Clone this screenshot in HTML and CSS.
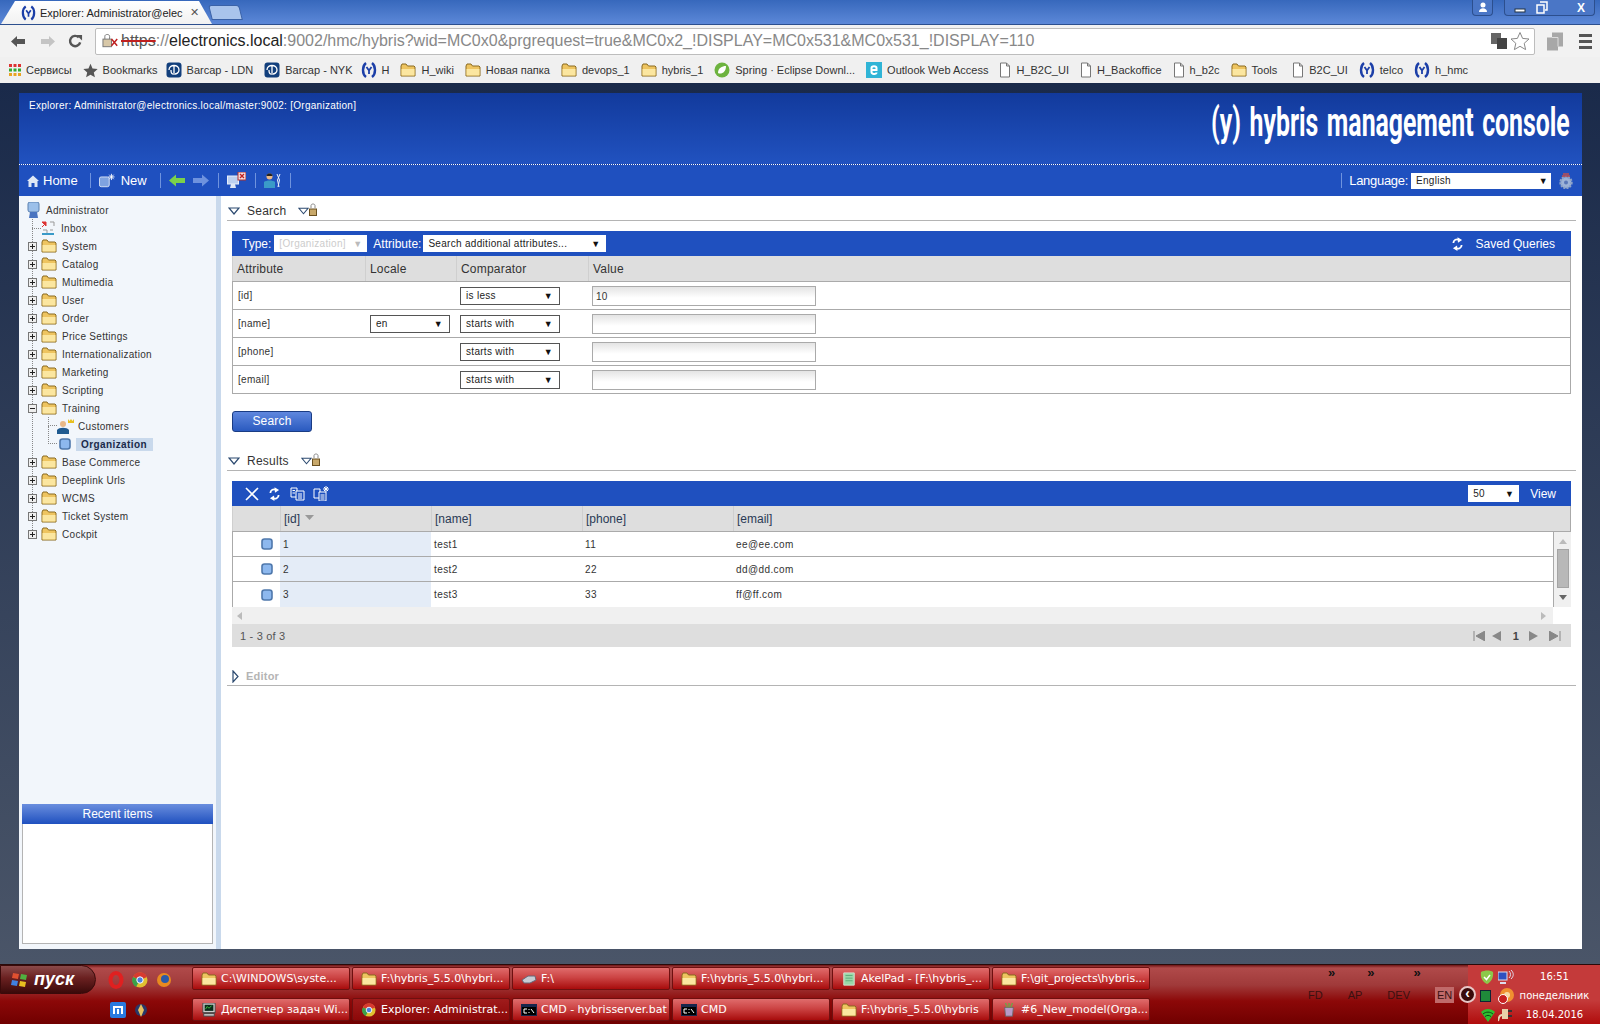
FILE: index.html
```html
<!doctype html>
<html>

<head>
    <meta charset="utf-8">
    <title>Explorer: Administrator@electronics.local</title>
    <link rel="stylesheet" href="styles.css">
</head>

<body>

    <!-- shared icons -->
    <svg class="iconDefs" width="0" height="0">
        <symbol id="folder" viewBox="0 0 16 14">
            <path d="M1 3 L2 1 H6 L7.500 3 H14 L15 4 V13 H1 Z" fill="#eec460" stroke="#8a6a20"/>
            <path d="M1.500 6 H14.500 V12.500 H1.500 Z" fill="#fbe6a0" stroke="none"/>
        </symbol>
        <symbol id="yLogo" viewBox="0 0 16 16">
            <path d="M5 1 C1 4 1 12 5 15 M11 1 C15 4 15 12 11 15" fill="none" stroke="#1c3fa8" stroke-width="2.400"/>
            <path d="M5.500 5 L8 8.500 L10.500 5 M8 8.500 V12" fill="none" stroke="#1c3fa8" stroke-width="1.800"/>
        </symbol>
        <symbol id="barcap" viewBox="0 0 16 16">
            <rect x="0.500" y="0.500" width="15" height="15" rx="3" fill="#123f7c"/>
            <path d="M3 8 C3 2 13 2 13 8 C13 11 10 12 9 12 M8 3 V13 M5 8 C5 11 6 12 7 12" fill="none" stroke="#fff" stroke-width="1.300"/>
        </symbol>
        <symbol id="doc" viewBox="0 0 12 16">
            <path d="M1.500 1 H7.500 L10.500 4 V15 H1.500 Z M7.500 1 V4 H10.500" fill="#fff" stroke="#777"/>
        </symbol>
        <symbol id="plusBox" viewBox="0 0 9 9">
            <rect x="0.500" y="0.500" width="8" height="8" fill="#efefef" stroke="#777"/>
            <path d="M2 4.500 H7 M4.500 2 V7" stroke="#222"/>
        </symbol>
        <symbol id="minusBox" viewBox="0 0 9 9">
            <rect x="0.500" y="0.500" width="8" height="8" fill="#efefef" stroke="#777"/>
            <path d="M2 4.500 H7" stroke="#222"/>
        </symbol>
        <symbol id="itemBox" viewBox="0 0 12 12">
            <rect x="1" y="1" width="10" height="10" rx="2.500" fill="#8db8ee" stroke="#4f78ac" stroke-width="1.600"/>
        </symbol>
        <symbol id="triDown" viewBox="0 0 12 8">
            <path d="M1 1 H11 L6 7 Z" fill="#fff" stroke="#2c4a70" stroke-width="1.200"/>
        </symbol>
        <symbol id="lock" viewBox="0 0 8 13">
            <path d="M2 5 V2.500 C2 0.500 6 0.500 6 2.500 V5" fill="none" stroke="#888"/>
            <rect x="0.500" y="6" width="7" height="6.500" fill="#c8a86a" stroke="#6a5020"/>
        </symbol>
        <symbol id="refresh" viewBox="0 0 12 16">
            <path d="M1.500 7 C1.500 3.500 5 2 8 3.500 M10.500 9 C10.500 12.500 7 14 4 12.500" fill="none" stroke="#fff" stroke-width="2"/>
            <path d="M6 0.500 L11 3.500 L6.500 6.500 Z M6 15.500 L1 12.500 L5.500 9.500 Z" fill="#fff"/>
        </symbol>
        <symbol id="cmd" viewBox="0 0 16 12">
            <rect width="16" height="12" fill="#16264c"/>
            <rect x="1" y="3" width="14" height="8" fill="#000"/>
            <path d="M3 5 H6 M3 5 V9 H6 M8 5 V6 M8 8 V9 M10 5 L13 9" stroke="#fff" fill="none"/>
        </symbol>
    </svg>

    <div class="tabStrip">
        <div class="tab">
            <svg class="tabIcon"><use href="#yLogo"/></svg>
            <span class="tabTitle">Explorer: Administrator@elec</span>
            <span class="tabClose">✕</span>
        </div>
        <div class="newTab"></div>
        <div class="windowButtons">
            <div class="winUser">
                <svg width="10" height="11" viewBox="0 0 10 11"><circle cx="5" cy="3" r="2.500" fill="#fff"/><path d="M1 10 C1 5 9 5 9 10 Z" fill="#fff"/></svg>
            </div>
            <div class="winGroup">
                <svg width="12" height="10" viewBox="0 0 12 10"><rect x="1" y="6" width="10" height="3" fill="#fff" stroke="#234"/></svg>
                <svg class="winMax" width="12" height="13" viewBox="0 0 12 13"><path d="M4 1 H11 V9 H9 M1 4 H8 V12 H1 Z" fill="none" stroke="#fff" stroke-width="1.500"/></svg>
                <span class="winClose">X</span>
            </div>
        </div>
    </div>

    <div class="navBar">
        <svg class="navIcon" viewBox="0 0 16 14"><path d="M1 7 L7 1.500 V4.500 H15 V9.500 H7 V12.500 Z" fill="#555"/></svg>
        <svg class="navIcon" viewBox="0 0 16 14"><path d="M15 7 L9 1.500 V4.500 H1 V9.500 H9 V12.500 Z" fill="#c4c4c4"/></svg>
        <svg class="navIcon" viewBox="0 0 16 16"><path d="M13 9 A5.500 5.500 0 1 1 11.500 3.500" fill="none" stroke="#555" stroke-width="2.600"/><path d="M9 1 H15 V7 Z" fill="#555"/></svg>
        <div class="omnibox">
            <svg class="secureIcon" viewBox="0 0 20 16">
                <rect x="1" y="6" width="9" height="8" fill="#d8c8a8" stroke="#777"/>
                <path d="M3 6 V3 C3 0.500 8 0.500 8 3 V6" fill="none" stroke="#777"/>
                <path d="M10 6 L16 13 M16 6 L10 13" stroke="#c02020" stroke-width="1.600"/>
            </svg>
            <div class="urlText"><span class="urlHttps">https</span><span class="urlGray">://</span><span class="urlHost">electronics.local</span><span class="urlGray">:9002/hmc/hybris?wid=MC0x0&amp;prgrequest=true&amp;MC0x2_!DISPLAY=MC0x531&amp;MC0x531_!DISPLAY=110</span></div>
            <svg class="translateIcon" viewBox="0 0 16 16"><rect x="0" y="0" width="10" height="11" fill="#666"/><rect x="6" y="5" width="10" height="11" fill="#444"/></svg>
            <svg class="starIcon" viewBox="0 0 20 20"><path d="M10 1.500 L12.600 7.400 L19 8 L14.200 12.300 L15.600 18.600 L10 15.300 L4.400 18.600 L5.800 12.300 L1 8 L7.400 7.400 Z" fill="#fff" stroke="#888"/></svg>
        </div>
        <svg class="extIcon" viewBox="0 0 18 20"><path d="M6 1 H17 V15 H12 V19 H1 V6 H6 Z" fill="#a8a8a8"/><path d="M6 6 H12 V15" fill="none" stroke="#ddd"/></svg>
        <div class="menuIcon"><span></span><span></span><span></span></div>
    </div>

    <div class="bookmarks">
        <div class="bookmark">
            <svg width="12" height="12" viewBox="0 0 12 12"><path d="M0 1.500 H12" stroke="#d33" stroke-width="3" stroke-dasharray="3 1.500"/><path d="M0 6 H12" stroke="#3a3" stroke-width="3" stroke-dasharray="3 1.500"/><path d="M0 10.500 H12" stroke="#e9a320" stroke-width="3" stroke-dasharray="3 1.500"/></svg>
            <span>Сервисы</span>
        </div>
        <div class="bookmark">
            <svg width="15" height="15" viewBox="0 0 20 20"><path d="M10 1 L12.700 7.300 L19.500 8 L14.400 12.500 L15.900 19 L10 15.500 L4.100 19 L5.600 12.500 L0.500 8 L7.300 7.300 Z" fill="#555"/></svg>
            <span>Bookmarks</span>
        </div>
        <div class="bookmark bmTight"><svg class="bmIcon"><use href="#barcap"/></svg><span>Barcap - LDN</span></div>
        <div class="bookmark"><svg class="bmIcon"><use href="#barcap"/></svg><span>Barcap - NYK</span></div>
        <div class="bookmark bmTight"><svg class="bmIcon"><use href="#yLogo"/></svg><span>H</span></div>
        <div class="bookmark"><svg class="bmIcon"><use href="#folder"/></svg><span>H_wiki</span></div>
        <div class="bookmark"><svg class="bmIcon"><use href="#folder"/></svg><span>Новая папка</span></div>
        <div class="bookmark"><svg class="bmIcon"><use href="#folder"/></svg><span>devops_1</span></div>
        <div class="bookmark"><svg class="bmIcon"><use href="#folder"/></svg><span>hybris_1</span></div>
        <div class="bookmark">
            <svg class="bmIcon" viewBox="0 0 16 16"><circle cx="8" cy="8" r="7.500" fill="#6db33f"/><path d="M4 11 C4 6 8 4 12 4 C12 9 9 12 5 11.500" fill="#fff"/></svg>
            <span>Spring · Eclipse Downl...</span>
        </div>
        <div class="bookmark">
            <svg class="bmIcon" viewBox="0 0 16 16"><rect width="16" height="16" fill="#2fb4d6"/><path d="M5.500 8 H10.500 V6 C10.500 3.500 5.500 3.500 5.500 6 V10 C5.500 12.500 10.500 12.500 10.500 10.500" fill="none" stroke="#fff" stroke-width="2"/></svg>
            <span>Outlook Web Access</span>
        </div>
        <div class="bookmark"><svg class="bmDoc"><use href="#doc"/></svg><span>H_B2C_UI</span></div>
        <div class="bookmark"><svg class="bmDoc"><use href="#doc"/></svg><span>H_Backoffice</span></div>
        <div class="bookmark"><svg class="bmDoc"><use href="#doc"/></svg><span>h_b2c</span></div>
        <div class="bookmark"><svg class="bmIcon"><use href="#folder"/></svg><span>Tools</span></div>
        <div class="bookmark bmLoose"><svg class="bmDoc"><use href="#doc"/></svg><span>B2C_UI</span></div>
        <div class="bookmark"><svg class="bmIcon"><use href="#yLogo"/></svg><span>telco</span></div>
        <div class="bookmark"><svg class="bmIcon"><use href="#yLogo"/></svg><span>h_hmc</span></div>
    </div>

    <div class="desktop">
        <div class="page">

            <div class="pageHeader">
                <div class="pageTitle">Explorer: Administrator@electronics.local/master:9002: [Organization]</div>
                <div class="logoText">(y) hybris management console</div>
            </div>

            <div class="mainToolbar">
                <div class="toolItem homeItem">
                    <svg width="12" height="12" viewBox="0 0 12 12"><path d="M0 6 L6 0.500 L12 6 L10.500 6 V12 H7.500 V8 H4.500 V12 H1.500 V6 Z" fill="#dfe8f6"/></svg>
                    <span>Home</span>
                </div>
                <div class="toolSep"></div>
                <div class="toolItem">
                    <svg width="16" height="15" viewBox="0 0 18 15"><rect x="0.500" y="3.500" width="11" height="11" rx="2" fill="#7fa3e0" stroke="#dfe8f6"/><path d="M14 0 V7 M10.500 3.500 H17.500 M11.500 1 L16.500 6 M16.500 1 L11.500 6" stroke="#fff"/></svg>
                    <span class="newLabel">New</span>
                </div>
                <div class="toolSep"></div>
                <svg class="toolArrow" width="16" height="13" viewBox="0 0 16 13"><path d="M0 6.500 L7 0.500 V4 H16 V9 H7 V12.500 Z" fill="#7bd14a"/></svg>
                <svg class="toolArrow" width="16" height="13" viewBox="0 0 16 13"><path d="M16 6.500 L9 0.500 V4 H0 V9 H9 V12.500 Z" fill="#6e92de"/></svg>
                <div class="toolSep sepTight"></div>
                <svg class="toolGlyph" width="19" height="17" viewBox="0 0 19 17"><rect x="0.500" y="4" width="11" height="8" fill="#bcd0f0" stroke="#e8eefa"/><path d="M4 12 L3 16 H9 L8 12" fill="#dfe8f6"/><rect x="11" y="0" width="8" height="8" fill="#f4dede" stroke="#b03030"/><path d="M13 2 L17 6 M17 2 L13 6" stroke="#c02020" stroke-width="1.300"/></svg>
                <div class="toolSep sepTight"></div>
                <svg class="toolGlyph" width="17" height="15" viewBox="0 0 17 15"><circle cx="5.500" cy="3.500" r="3" fill="#e8b888"/><path d="M5.500 0.500 C2.500 0.500 2.500 3 2.500 3 H8.500 C8.500 3 8.500 0.500 5.500 0.500 Z" fill="#222"/><path d="M0 15 V9 C2 7 9 7 11 9 V15 Z" fill="#3a9ac8"/><path d="M13 1 L15.500 7 L14 14 M16 1 L13.500 7 L15 14" fill="none" stroke="#e8eefa"/></svg>
                <div class="toolSep sepTight"></div>
                <div class="toolSpacer"></div>
                <div class="toolSep sepRight"></div>
                <div class="langLabel">Language:</div>
                <div class="fakeSelect langSelect"><span>English</span><i>▼</i></div>
                <svg class="gearIcon" width="16" height="16" viewBox="0 0 16 16"><circle cx="8" cy="9.500" r="5.500" fill="#9db4d8" stroke="#8da3c8" stroke-width="2.400" stroke-dasharray="2 1"/><circle cx="8" cy="9.500" r="2" fill="#5a78b8"/><path d="M5 1 H11 M4 3 H12" stroke="#c05050" stroke-width="1.400"/></svg>
            </div>

            <div class="pageBody">

                <div class="sidebar">
                    <div class="treeRoot">
                        <svg width="14" height="17" viewBox="0 0 14 17"><rect x="1" y="0" width="11" height="10" rx="2" fill="#9cc0ea" stroke="#5a80b0"/><path d="M3 10 L2 16 H11 L10 10" fill="#4a74c0"/></svg>
                        <span>Administrator</span>
                    </div>
                    <div class="tree">
                        <div class="treeRow leafRow">
                            <i class="treeDots"></i>
                            <svg width="14" height="14" viewBox="0 0 14 14"><path d="M4 3 L1 6 M1 1 H5 V5 Z" fill="#d33" stroke="#d33"/><path d="M9 1 H13 V5 M2 9 H6 V13 M9 9 H12" fill="none" stroke="#999"/><path d="M1 13 H13" stroke="#3a9ac8" stroke-width="2"/></svg>
                            <span class="inboxLabel">Inbox</span>
                        </div>
                        <div class="treeRow"><svg class="plus"><use href="#plusBox"/></svg><svg class="treeFolder"><use href="#folder"/></svg><span>System</span></div>
                        <div class="treeRow"><svg class="plus"><use href="#plusBox"/></svg><svg class="treeFolder"><use href="#folder"/></svg><span>Catalog</span></div>
                        <div class="treeRow"><svg class="plus"><use href="#plusBox"/></svg><svg class="treeFolder"><use href="#folder"/></svg><span>Multimedia</span></div>
                        <div class="treeRow"><svg class="plus"><use href="#plusBox"/></svg><svg class="treeFolder"><use href="#folder"/></svg><span>User</span></div>
                        <div class="treeRow"><svg class="plus"><use href="#plusBox"/></svg><svg class="treeFolder"><use href="#folder"/></svg><span>Order</span></div>
                        <div class="treeRow"><svg class="plus"><use href="#plusBox"/></svg><svg class="treeFolder"><use href="#folder"/></svg><span>Price Settings</span></div>
                        <div class="treeRow"><svg class="plus"><use href="#plusBox"/></svg><svg class="treeFolder"><use href="#folder"/></svg><span>Internationalization</span></div>
                        <div class="treeRow"><svg class="plus"><use href="#plusBox"/></svg><svg class="treeFolder"><use href="#folder"/></svg><span>Marketing</span></div>
                        <div class="treeRow"><svg class="plus"><use href="#plusBox"/></svg><svg class="treeFolder"><use href="#folder"/></svg><span>Scripting</span></div>
                        <div class="treeRow"><svg class="plus"><use href="#minusBox"/></svg><svg class="treeFolder"><use href="#folder"/></svg><span>Training</span></div>
                        <div class="treeChildren">
                            <div class="childRow">
                                <i class="childDots"></i>
                                <svg width="17" height="15" viewBox="0 0 17 15"><circle cx="6" cy="5" r="3" fill="#e8b888"/><path d="M0 15 V11 C2 8 10 8 12 11 V15 Z" fill="#1f5a90"/><path d="M11 0 L12.500 2 L14 0 L15.500 2 L17 0 V4 H11 Z" fill="#e8c020"/></svg>
                                <span class="customersLabel">Customers</span>
                            </div>
                            <div class="childRow">
                                <i class="childDots"></i>
                                <svg class="orgIcon" width="12" height="12"><use href="#itemBox"/></svg>
                                <span class="treeSelected">Organization</span>
                            </div>
                        </div>
                        <div class="treeRow"><svg class="plus"><use href="#plusBox"/></svg><svg class="treeFolder"><use href="#folder"/></svg><span>Base Commerce</span></div>
                        <div class="treeRow"><svg class="plus"><use href="#plusBox"/></svg><svg class="treeFolder"><use href="#folder"/></svg><span>Deeplink Urls</span></div>
                        <div class="treeRow"><svg class="plus"><use href="#plusBox"/></svg><svg class="treeFolder"><use href="#folder"/></svg><span>WCMS</span></div>
                        <div class="treeRow"><svg class="plus"><use href="#plusBox"/></svg><svg class="treeFolder"><use href="#folder"/></svg><span>Ticket System</span></div>
                        <div class="treeRow"><svg class="plus"><use href="#plusBox"/></svg><svg class="treeFolder"><use href="#folder"/></svg><span>Cockpit</span></div>
                    </div>

                    <div class="recentItems">
                        <div class="recentHeader">Recent items</div>
                    </div>
                </div>

                <div class="content">

                    <div class="sectionHeader">
                        <svg class="sectionTri"><use href="#triDown"/></svg>
                        <span class="sectionName">Search</span>
                        <svg class="sectionTri smallTri"><use href="#triDown"/></svg>
                        <svg class="lockIcon"><use href="#lock"/></svg>
                    </div>

                    <div class="panel">
                        <div class="blueBar">
                            <span class="barLabel">Type:</span>
                            <div class="fakeSelect typeSelect"><span>[Organization]</span><i>▼</i></div>
                            <span class="barLabel attrLabel">Attribute:</span>
                            <div class="fakeSelect attrSelect"><span>Search additional attributes...</span><i>▼</i></div>
                            <div class="barRight">
                                <svg class="barRefresh"><use href="#refresh"/></svg>
                                <span class="barLabel">Saved Queries</span>
                            </div>
                        </div>
                        <div class="searchHead">
                            <div>Attribute</div>
                            <div>Locale</div>
                            <div>Comparator</div>
                            <div>Value</div>
                        </div>
                        <div class="searchRow">
                            <div>[id]</div>
                            <div></div>
                            <div><div class="fakeSelect rowSelect"><span>is less</span><i>▼</i></div></div>
                            <div><div class="valueInput">10</div></div>
                        </div>
                        <div class="searchRow">
                            <div>[name]</div>
                            <div><div class="fakeSelect localeSelect"><span>en</span><i>▼</i></div></div>
                            <div><div class="fakeSelect rowSelect"><span>starts with</span><i>▼</i></div></div>
                            <div><div class="valueInput"></div></div>
                        </div>
                        <div class="searchRow">
                            <div>[phone]</div>
                            <div></div>
                            <div><div class="fakeSelect rowSelect"><span>starts with</span><i>▼</i></div></div>
                            <div><div class="valueInput"></div></div>
                        </div>
                        <div class="searchRow">
                            <div>[email]</div>
                            <div></div>
                            <div><div class="fakeSelect rowSelect"><span>starts with</span><i>▼</i></div></div>
                            <div><div class="valueInput"></div></div>
                        </div>
                        <div class="searchButton">Search</div>
                    </div>

                    <div class="sectionHeader resultsHeader">
                        <svg class="sectionTri"><use href="#triDown"/></svg>
                        <span class="sectionName">Results</span>
                        <svg class="sectionTri smallTri"><use href="#triDown"/></svg>
                        <svg class="lockIcon"><use href="#lock"/></svg>
                    </div>

                    <div class="panel">
                        <div class="blueBar">
                            <svg class="resIcon" width="14" height="14" viewBox="0 0 14 14"><path d="M1 1 L13 13 M13 1 L1 13" stroke="#fff" stroke-width="1.600"/></svg>
                            <svg class="barRefresh resRefresh"><use href="#refresh"/></svg>
                            <svg class="resIcon resCopy" width="15" height="14" viewBox="0 0 15 14"><path d="M1 1 H7 V10 H1 Z" fill="#1f50bf" stroke="#fff"/><path d="M6 4 H14 V13 H6 Z" fill="#1f50bf" stroke="#fff"/><path d="M8 7 H12 M8 9 H12 M8 11 H12 M2.500 3.500 H5 M2.500 6 H5" stroke="#fff"/></svg>
                            <svg class="resIcon resPaste" width="16" height="15" viewBox="0 0 16 15"><path d="M1 3 H7 V12 H1 Z" fill="#1f50bf" stroke="#fff"/><path d="M6 6 H13 V15 H6 Z" fill="#1f50bf" stroke="#fff"/><path d="M7.500 9 H11.500 M7.500 11 H11.500 M7.500 13 H11.500" stroke="#fff"/><path d="M13 0 V6 M10 3 H16 M11 1 L15 5 M15 1 L11 5" stroke="#fff"/></svg>
                            <div class="barRight">
                                <div class="fakeSelect pageSizeSelect"><span>50</span><i>▼</i></div>
                                <span class="barLabel viewLabel">View</span>
                            </div>
                        </div>
                        <div class="resultHead">
                            <div></div>
                            <div>[id] <svg class="sortIcon" width="9" height="5" viewBox="0 0 9 5"><path d="M0 0 H9 L4.500 5 Z" fill="#999"/></svg></div>
                            <div>[name]</div>
                            <div>[phone]</div>
                            <div>[email]</div>
                        </div>
                        <div class="resultBody">
                            <div class="resultRows">
                                <div class="resultRow">
                                    <div class="rowMark"><svg width="12" height="12"><use href="#itemBox"/></svg></div>
                                    <div class="idCell">1</div>
                                    <div>test1</div>
                                    <div>11</div>
                                    <div>ee@ee.com</div>
                                </div>
                                <div class="resultRow">
                                    <div class="rowMark"><svg width="12" height="12"><use href="#itemBox"/></svg></div>
                                    <div class="idCell">2</div>
                                    <div>test2</div>
                                    <div>22</div>
                                    <div>dd@dd.com</div>
                                </div>
                                <div class="resultRow lastRow">
                                    <div class="rowMark"><svg width="12" height="12"><use href="#itemBox"/></svg></div>
                                    <div class="idCell">3</div>
                                    <div>test3</div>
                                    <div>33</div>
                                    <div>ff@ff.com</div>
                                </div>
                            </div>
                            <div class="vScroll">
                                <svg width="8" height="5" viewBox="0 0 8 5"><path d="M0 5 L4 0 L8 5 Z" fill="#bbb"/></svg>
                                <div class="vThumb"></div>
                                <svg width="8" height="5" viewBox="0 0 8 5"><path d="M0 0 L4 5 L8 0 Z" fill="#666"/></svg>
                            </div>
                        </div>
                        <div class="hScrollRow">
                            <div class="hScroll">
                                <svg width="5" height="8" viewBox="0 0 5 8"><path d="M5 0 L0 4 L5 8 Z" fill="#bbb"/></svg>
                                <svg width="5" height="8" viewBox="0 0 5 8"><path d="M0 0 L5 4 L0 8 Z" fill="#bbb"/></svg>
                            </div>
                        </div>
                        <div class="pagerRow">
                            <span>1 - 3 of 3</span>
                            <div class="pager">
                                <svg width="12" height="10" viewBox="0 0 12 10"><path d="M1 0 V10 M12 0 L3 5 L12 10 Z" fill="#888" stroke="#888"/></svg>
                                <svg width="10" height="10" viewBox="0 0 10 10"><path d="M10 0 L1 5 L10 10 Z" fill="#888"/></svg>
                                <b>1</b>
                                <svg width="10" height="10" viewBox="0 0 10 10"><path d="M0 0 L9 5 L0 10 Z" fill="#888"/></svg>
                                <svg class="pagerLast" width="12" height="10" viewBox="0 0 12 10"><path d="M11 0 V10 M0 0 L9 5 L0 10 Z" fill="#888" stroke="#888"/></svg>
                            </div>
                        </div>
                    </div>

                    <div class="sectionHeader editorHeader">
                        <svg width="7" height="13" viewBox="0 0 7 13"><path d="M1 1 L6 6.500 L1 12 Z" fill="#fff" stroke="#2c4a70" stroke-width="1.200"/></svg>
                        <span class="sectionName editorName">Editor</span>
                    </div>

                </div>
            </div>
        </div>
    </div>

    <div class="taskbar">
        <div class="startArea">
            <div class="startButton">
                <svg width="18" height="16" viewBox="0 0 18 16"><path d="M2 1 L8 2 L7 7 L1 6 Z" fill="#e05030"/><path d="M10 2 L16 3 L15 8 L9 7 Z" fill="#50b040"/><path d="M1 8 L7 9 L6 14 L0 13 Z" fill="#4080e0"/><path d="M9 9 L15 10 L14 15 L8 14 Z" fill="#e8c020"/></svg>
                <span>пуск</span>
            </div>
            <div class="quickIcons">
                <svg width="16" height="18" viewBox="0 0 16 18"><ellipse cx="8" cy="9" rx="5.500" ry="7" fill="none" stroke="#e02020" stroke-width="4"/></svg>
                <svg width="16" height="16" viewBox="0 0 16 16"><circle cx="8" cy="8" r="7.500" fill="#e0c030"/><path d="M8 8 L1 5 A7.500 7.500 0 0 1 15 5 Z" fill="#d83a30"/><path d="M8 8 L4 15 A7.500 7.500 0 0 1 1 5 Z" fill="#3aa04a"/><circle cx="8" cy="8" r="3.200" fill="#4a80e0" stroke="#fff"/></svg>
                <svg width="16" height="17" viewBox="0 0 16 17"><circle cx="8" cy="9" r="7" fill="#e88a20"/><circle cx="9" cy="8" r="4" fill="#2a5aa8"/></svg>
            </div>
            <div class="quickIcons lowerQuick">
                <svg width="16" height="16" viewBox="0 0 16 16"><rect width="16" height="16" rx="2" fill="#2a7ae0"/><path d="M4 12 V5 H12 V12 M8 7 V12" fill="none" stroke="#fff" stroke-width="2"/></svg>
                <svg width="16" height="17" viewBox="0 0 16 17"><circle cx="8" cy="8" r="6" fill="#28386a"/><path d="M8 2 L11 8 L8 15 L5 8 Z" fill="#e8c060"/></svg>
            </div>
        </div>
        <div class="taskButtons">
            <div class="taskButton"><svg class="taskFolder"><use href="#folder"/></svg><span>C:\WINDOWS\syste...</span></div>
            <div class="taskButton"><svg class="taskFolder"><use href="#folder"/></svg><span>F:\hybris_5.5.0\hybri...</span></div>
            <div class="taskButton">
                <svg class="taskFolder" viewBox="0 0 16 14"><path d="M1 8 L7 4 H14 L15 8 L9 11 H3 Z" fill="#c8ccd4" stroke="#667"/></svg>
                <span>F:\</span>
            </div>
            <div class="taskButton"><svg class="taskFolder"><use href="#folder"/></svg><span>F:\hybris_5.5.0\hybri...</span></div>
            <div class="taskButton">
                <svg class="taskFolder" viewBox="0 0 16 16"><path d="M2 1 H14 V15 H2 Z" fill="#9ad8a8" stroke="#d8e8d8"/><path d="M4 4 H12 M4 7 H12 M4 10 H12" stroke="#5aa878"/></svg>
                <span>AkelPad - [F:\hybris_...</span>
            </div>
            <div class="taskButton"><svg class="taskFolder"><use href="#folder"/></svg><span>F:\git_projects\hybris...</span></div>
            <div class="taskButton">
                <svg class="taskFolder" viewBox="0 0 16 16"><rect x="1" y="0" width="14" height="11" fill="#ccc" stroke="#444"/><rect x="3" y="2" width="10" height="7" fill="#0a2a1a"/><path d="M4 7 L6 4 L8 6 L11 3" fill="none" stroke="#4c4"/><rect x="2" y="12" width="12" height="3" fill="#bbb" stroke="#444"/></svg>
                <span>Диспетчер задач Wi...</span>
            </div>
            <div class="taskButton taskActive">
                <svg class="taskFolder" viewBox="0 0 16 16"><circle cx="8" cy="8" r="7.500" fill="#e0c030"/><path d="M8 8 L1 5 A7.500 7.500 0 0 1 15 5 Z" fill="#d83a30"/><path d="M8 8 L4 15 A7.500 7.500 0 0 1 1 5 Z" fill="#3aa04a"/><circle cx="8" cy="8" r="3.200" fill="#4a80e0" stroke="#fff"/></svg>
                <span>Explorer: Administrat...</span>
            </div>
            <div class="taskButton"><svg class="taskFolder"><use href="#cmd"/></svg><span>CMD - hybrisserver.bat</span></div>
            <div class="taskButton"><svg class="taskFolder"><use href="#cmd"/></svg><span>CMD</span></div>
            <div class="taskButton"><svg class="taskFolder"><use href="#folder"/></svg><span>F:\hybris_5.5.0\hybris</span></div>
            <div class="taskButton">
                <svg class="taskFolder" viewBox="0 0 16 16"><path d="M3 5 H13 L12 15 H4 Z" fill="#b89ac8" stroke="#666"/><path d="M6 5 L4 0 M8 5 V0 M10 5 L12 0" stroke="#6a4" stroke-width="1.500"/></svg>
                <span>#6_New_model(Orga...</span>
            </div>
        </div>
        <div class="langBands">
            <div class="bandArrows"><span>»</span><span>»</span><span>»</span></div>
            <div class="bandNames"><span>FD</span><span>AP</span><span>DEV</span><span class="bandActive">EN</span></div>
        </div>
        <div class="trayToggle">‹</div>
        <div class="tray">
            <div class="trayIcons">
                <svg width="14" height="14" viewBox="0 0 14 14"><path d="M1 2 C5 0 10 0 13 2 C14 8 10 13 7 14 C3 12 0 8 1 2 Z" fill="#8cc84a"/><path d="M4 7 L6.500 9.500 L10 5" fill="none" stroke="#fff" stroke-width="1.500"/></svg>
                <svg width="16" height="14" viewBox="0 0 16 14"><rect x="0" y="2" width="9" height="8" fill="#3050c0" stroke="#dde"/><path d="M2 13 H8" stroke="#dde" stroke-width="2"/><path d="M11 1 C13 3 13 6 11 8 M13 0 C16 3 16 6 13 9" fill="none" stroke="#dde"/></svg>
                <svg width="11" height="12" viewBox="0 0 11 12"><rect x="0.500" y="0.500" width="10" height="11" fill="#1f8a3a" stroke="#123"/></svg>
                <svg width="16" height="16" viewBox="0 0 16 16"><circle cx="9" cy="7" r="7" fill="#f09030"/><circle cx="9" cy="7" r="3" fill="#f8d8a0"/><circle cx="5" cy="11" r="4.500" fill="#c82020" stroke="#fff"/></svg>
                <svg width="16" height="14" viewBox="0 0 16 14"><path d="M1 4 C5 0 11 0 15 4 L8 14 Z" fill="#30c030"/><path d="M3 6 C6 3.500 10 3.500 13 6 M5 8.500 C7 7 9 7 11 8.500" fill="none" stroke="#0a4a14"/></svg>
                <svg width="15" height="15" viewBox="0 0 15 15"><path d="M0 14 C1 8 3 8 4 8" fill="none" stroke="#e8d8b8" stroke-width="2"/><rect x="4" y="2" width="6" height="10" fill="#e8d0a8"/><rect x="10" y="3" width="4" height="2" fill="#333"/><rect x="10" y="8" width="4" height="2" fill="#333"/></svg>
            </div>
            <div class="clock">
                <div>16:51</div>
                <div>понедельник</div>
                <div>18.04.2016</div>
            </div>
        </div>
    </div>

</body>

</html>
```

FILE: styles.css
```css
* {
    box-sizing: border-box;
}

body {
    margin: 0;
    height: 1024px;
    width: 1600px;
    overflow: hidden;
    display: flex;
    flex-direction: column;
    font-family: "Liberation Sans", Arial, sans-serif;
    font-size: 11px;
    color: #333;
}

.iconDefs {
    position: absolute;
}

/* browser window */

.tabStrip {
    height: 25px;
    flex: none;
    display: flex;
    align-items: flex-end;
    padding-left: 1px;
    background: linear-gradient(#3768bc, #5c88d8);
    border-bottom: 1px solid #2c4f8e;
}

.tab {
    width: 211px;
    height: 23px;
    display: flex;
    align-items: center;
    padding-left: 20px;
    background: linear-gradient(#ffffff, #f1f1f1);
    clip-path: polygon(14px 0, 198px 0, 211px 100%, 0 100%);
}

.tabIcon {
    width: 15px;
    height: 16px;
    flex: none;
}

.tabTitle {
    width: 148px;
    margin-left: 4px;
    font-size: 11px;
    white-space: nowrap;
    color: #222;
}

.tabClose {
    margin-left: 2px;
    font-size: 11px;
    color: #555;
}

.newTab {
    width: 31px;
    height: 15px;
    margin: 0 0 4px -2px;
    border: 1px solid #3a62a8;
    background: #a9c4ec;
    border-radius: 3px 3px 0 0;
    transform: skewX(14deg);
}

.windowButtons {
    margin-left: auto;
    align-self: flex-start;
    display: flex;
    gap: 11px;
    margin-right: 5px;
}

.winUser,
.winGroup {
    height: 16px;
    display: flex;
    align-items: center;
    justify-content: center;
    background: #4a76c6;
    border: 1px solid #2c4f8e;
    border-top: 0;
    border-radius: 0 0 4px 4px;
}

.winUser {
    width: 21px;
}

.winGroup {
    width: 91px;
    gap: 10px;
}

.winClose {
    margin-left: 19px;
    color: #fff;
    font-weight: bold;
    font-size: 12px;
}

.navBar {
    height: 32px;
    flex: none;
    display: flex;
    align-items: center;
    padding-left: 10px;
    background: #f2f2f2;
}

.navIcon {
    width: 16px;
    height: 15px;
    margin-right: 14px;
    flex: none;
}

.navIcon + .navIcon + .navIcon {
    margin-left: -3px;
    width: 17px;
    margin-right: 11px;
}

.omnibox {
    width: 1440px;
    height: 27px;
    flex: none;
    display: flex;
    align-items: center;
    background: #fff;
    border: 1px solid #bdbdbd;
    border-radius: 2px;
}

.secureIcon {
    width: 19px;
    height: 16px;
    margin-left: 6px;
    flex: none;
}

.urlText {
    font-size: 16px;
    white-space: nowrap;
    color: #888;
    flex: 1;
}

.urlHttps {
    color: #555;
    text-decoration: line-through;
    text-decoration-color: #c02020;
    text-decoration-thickness: 2px;
}

.urlHost {
    color: #222;
}

.translateIcon {
    width: 16px;
    height: 16px;
    flex: none;
}

.starIcon {
    width: 20px;
    height: 20px;
    margin: 0 4px 0 3px;
    flex: none;
}

.extIcon {
    width: 18px;
    height: 21px;
    margin-left: 11px;
    flex: none;
}

.menuIcon {
    margin-left: 15px;
    width: 13px;
    display: flex;
    flex-direction: column;
    gap: 3px;
}

.menuIcon span {
    height: 3px;
    background: #555;
}

.bookmarks {
    height: 27px;
    flex: none;
    display: flex;
    align-items: center;
    gap: 11px;
    padding-left: 9px;
    background: #f0f0f0;
    border-bottom: 1px solid #1a2a4a;
    font-size: 11px;
    color: #333;
    white-space: nowrap;
}

.bookmark {
    display: flex;
    align-items: center;
    gap: 5px;
}

.bmTight {
    margin-left: -3px;
}

.bmLoose {
    margin-left: 4px;
}

.bmIcon {
    width: 16px;
    height: 16px;
    flex: none;
}

.bmDoc {
    width: 12px;
    height: 16px;
    flex: none;
}

.desktop {
    flex: 1;
    min-height: 0;
    padding: 9px 18px 15px 19px;
    display: flex;
    background: linear-gradient(#1a2a4a, #4a5568);
}

/* hmc page */

.page {
    flex: 1;
    display: flex;
    flex-direction: column;
    min-width: 0;
    background: #fff;
}

.pageHeader {
    height: 72px;
    flex: none;
    display: flex;
    justify-content: space-between;
    padding: 6px 12px 0 10px;
    background: linear-gradient(#123a9c, #2152c0);
    border-bottom: 1px dotted #fff;
    color: #fff;
}

.pageTitle {
    font-size: 10px;
    line-height: 14px;
    letter-spacing: .27px;
}

.logoText {
    margin-top: 4px;
    font-family: "Roboto", sans-serif;
    font-weight: 700;
    font-size: 41px;
    line-height: 38px;
    white-space: nowrap;
    word-spacing: 4px;
    transform: scaleX(.605);
    transform-origin: right top;
}

.mainToolbar {
    height: 31px;
    flex: none;
    display: flex;
    align-items: center;
    padding-left: 8px;
    background: #1f50bf;
    color: #fff;
    font-size: 13px;
}

.toolItem {
    display: flex;
    align-items: center;
    gap: 4px;
}

.newLabel {
    margin-left: 2px;
}

.toolSep {
    width: 1px;
    height: 15px;
    margin: 0 8px 0 13px;
    background: #6f93de;
}

.homeItem + .toolSep {
    margin-left: 12px;
}

.sepTight {
    margin-left: 9px;
}

.sepRight {
    margin-right: 7px;
}

.toolArrow + .toolArrow {
    margin-left: 8px;
}

.toolSpacer {
    flex: 1;
}

.langLabel {
    margin-right: 3px;
    letter-spacing: -.3px;
}

.fakeSelect {
    display: flex;
    align-items: center;
    justify-content: space-between;
    background: #fff;
    color: #222;
    font-size: 10px;
    letter-spacing: .03em;
    white-space: nowrap;
}

.fakeSelect i {
    font-style: normal;
    font-size: 9px;
    color: #111;
}

.langSelect {
    width: 140px;
    height: 16px;
    padding: 0 3px 0 5px;
}

.gearIcon {
    margin: 0 8px 0 7px;
}

.pageBody {
    flex: 1;
    min-height: 0;
    display: flex;
}

/* left tree */

.sidebar {
    width: 202px;
    flex: none;
    display: flex;
    flex-direction: column;
    padding: 5px 3px 5px 3px;
    background: #f2f6fb;
    border-right: 5px solid #c9d9ec;
    font-size: 10px;
    letter-spacing: .03em;
}

.treeRoot {
    height: 18px;
    display: flex;
    align-items: center;
    gap: 5px;
    padding-left: 5px;
}

.tree {
    margin-left: 10px;
    margin-bottom: auto;
    margin-right: auto;
    background: linear-gradient(#888 50%, transparent 50%) 0 0 / 1px 2px repeat-y;
}

.treeRow {
    height: 18px;
    display: flex;
    align-items: center;
    margin-left: -4px;
}

.plus {
    width: 9px;
    height: 9px;
    flex: none;
}

.treeFolder {
    width: 16px;
    height: 14px;
    margin-left: 4px;
    margin-right: 5px;
    flex: none;
}

.leafRow {
    margin-left: 0;
}

.treeDots {
    width: 9px;
    border-top: 1px dotted #888;
}

.inboxLabel {
    margin-left: 6px;
}

.treeChildren {
    margin-left: 16px;
}

.childRow {
    height: 18px;
    display: flex;
    align-items: center;
}

.childDots {
    width: 9px;
    height: 18px;
    margin-top: -18px;
    border-left: 1px dotted #888;
    border-bottom: 1px dotted #888;
    flex: none;
}

.childRow:first-child .childDots {
    height: 9px;
    margin-top: -9px;
}

.customersLabel {
    margin-left: 4px;
}

.orgIcon {
    margin-left: 2px;
    flex: none;
}

.treeSelected {
    margin-left: 5px;
    padding: 1px 6px 1px 5px;
    background: #c9d9ec;
    font-weight: bold;
    letter-spacing: .4px;
    color: #1a2a4a;
}

/* hide the tree line below the last row */
.treeRow:last-child {
    background: linear-gradient(transparent 50%, #f2f6fb 50%);
}

.recentItems {
    height: 140px;
    flex: none;
    background: #fff;
    border: 1px solid #b4b4b4;
    border-top: 0;
}

.recentHeader {
    height: 20px;
    margin: 0 -1px;
    text-align: center;
    line-height: 20px;
    color: #fff;
    font-size: 12px;
    letter-spacing: 0;
    background: linear-gradient(#6a8ede, #1f50bf);
}

/* right side */

.content {
    flex: 1;
    min-width: 0;
    padding: 0 6px;
}

.sectionHeader {
    height: 25px;
    display: flex;
    align-items: center;
    padding: 6px 0 0 1px;
    border-bottom: 1px solid #b4b4b4;
}

.sectionTri {
    width: 12px;
    height: 8px;
    flex: none;
}

.sectionName {
    margin: 0 12px 0 7px;
    font-size: 12px;
    color: #333;
    letter-spacing: .02em;
}

.smallTri {
    width: 11px;
}

.lockIcon {
    width: 8px;
    height: 13px;
    margin: -3px 0 0 0;
    flex: none;
}

.panel {
    margin: 10px 5px 0;
}

.blueBar {
    height: 25px;
    display: flex;
    align-items: center;
    padding-left: 10px;
    background: #1f50bf;
    color: #fff;
}

.barLabel {
    font-size: 12px;
}

.attrLabel {
    margin-left: 6px;
}

.typeSelect {
    width: 93px;
    height: 17px;
    margin-left: 3px;
    padding: 0 5px;
    color: #ccc;
}

.typeSelect i {
    color: #bbb;
}

.attrSelect {
    width: 183px;
    height: 17px;
    margin-left: 2px;
    padding: 0 6px 0 5px;
}

.barRight {
    margin-left: auto;
    margin-right: 16px;
    display: flex;
    align-items: center;
}

.barRefresh {
    width: 11px;
    height: 16px;
    margin-right: 13px;
    flex: none;
}

.searchHead {
    display: grid;
    grid-template-columns: 133px 91px 132px 1fr;
    align-items: center;
    height: 26px;
    background: #dedede;
    border-bottom: 1px solid #aaa;
    border-right: 1px solid #aaa;
    color: #333;
    font-size: 12px;
    letter-spacing: .2px;
}

.searchHead > div {
    height: 100%;
    display: flex;
    align-items: center;
    padding-left: 4px;
    border-left: 1px solid #cfcfcf;
}

.searchRow {
    display: grid;
    grid-template-columns: 132px 90px 132px 1fr;
    align-items: center;
    height: 28px;
    padding-left: 5px;
    border: 1px solid #aaa;
    border-top: 0;
    font-size: 10px;
    letter-spacing: .03em;
}

.rowSelect,
.localeSelect {
    height: 18px;
    border: 1px solid #555;
    padding: 0 6px 0 5px;
    font-size: 10px;
}

.rowSelect {
    width: 100px;
}

.localeSelect {
    width: 80px;
}

.valueInput {
    width: 224px;
    height: 20px;
    padding: 3px 3px 0;
    border: 1px solid #aaa;
    background: linear-gradient(#e4e4e4, #fff 60%);
    line-height: 13px;
}

.searchButton {
    width: 80px;
    height: 21px;
    margin-top: 17px;
    border: 1px solid #1a3c84;
    border-radius: 3px;
    background: linear-gradient(#5f87de, #2a5abf);
    color: #fff;
    font-size: 12px;
    letter-spacing: .2px;
    line-height: 19px;
    text-align: center;
}

.resultsHeader {
    margin-top: 14px;
}

.resIcon {
    margin-left: 3px;
    flex: none;
}

.resRefresh {
    margin: 0 0 0 10px;
}

.resCopy {
    margin-left: 10px;
}

.resPaste {
    margin-left: 8px;
}

.pageSizeSelect {
    width: 51px;
    height: 17px;
    padding: 0 5px;
}

.viewLabel {
    margin-left: 11px;
    margin-right: -1px;
}

.resultHead {
    display: grid;
    grid-template-columns: 48px 151px 151px 151px 1fr;
    align-items: center;
    height: 26px;
    background: #dedede;
    border-bottom: 1px solid #aaa;
    border-right: 1px solid #aaa;
    color: #2a3a55;
    font-size: 12px;
}

.resultHead > div {
    height: 100%;
    display: flex;
    align-items: center;
    gap: 5px;
    padding-left: 3px;
    border-left: 1px solid #cfcfcf;
}

.sortIcon {
    margin-top: -3px;
}

.resultBody {
    display: flex;
    height: 75px;
}

.resultRows {
    flex: 1;
    min-width: 0;
    border-left: 1px solid #aaa;
}

.resultRow {
    display: grid;
    grid-template-columns: 47px 151px 151px 151px 1fr;
    align-items: center;
    height: 25px;
    border-bottom: 1px solid #aaa;
    font-size: 10px;
    letter-spacing: .4px;
}

.resultRow > div {
    height: 100%;
    display: flex;
    align-items: center;
    padding-left: 3px;
}

.resultRow.lastRow {
    border-bottom: 0;
}

.resultRow > .rowMark {
    justify-content: flex-end;
    padding: 0 7px 0 0;
}

.resultRow > .idCell {
    background: #e4ecf7;
}

.vScroll {
    width: 18px;
    flex: none;
    display: flex;
    flex-direction: column;
    align-items: center;
    padding-top: 7px;
    background: #f0f0f0;
    border-left: 1px solid #aaa;
}

.vThumb {
    width: 12px;
    height: 39px;
    margin: 5px 0 7px;
    background: #b8b8b8;
    border: 1px solid #a4a4a4;
}

.hScrollRow {
    height: 17px;
    padding-right: 18px;
}

.hScroll {
    height: 100%;
    display: flex;
    align-items: center;
    justify-content: space-between;
    padding: 0 7px 0 5px;
    background: #f0f0f0;
}

.pagerRow {
    height: 23px;
    display: flex;
    align-items: center;
    justify-content: space-between;
    padding: 0 10px 0 8px;
    background: #dedede;
    color: #555;
    font-size: 11px;
    letter-spacing: .2px;
}

.pager {
    display: flex;
    align-items: center;
    gap: 6px;
}

.pager b {
    margin: 0 4px 0 6px;
    font-size: 11px;
    color: #444;
}

.pagerLast {
    margin-left: 4px;
}

.editorHeader {
    margin-top: 14px;
    padding-left: 5px;
}

.editorName {
    color: #b4b4b4;
    margin-left: 7px;
    font-weight: bold;
    font-size: 11px;
}

/* windows taskbar */

.taskbar {
    height: 60px;
    flex: none;
    display: flex;
    background: linear-gradient(#6e1414, #b04a4a 3px, #a03a3a 20px, #8c0808 36px, #700000);
    border-top: 1px solid #2a0a0a;
    color: #fff;
}

.startArea {
    width: 192px;
    flex: none;
    display: grid;
    grid-template-columns: 96px 1fr;
    grid-template-rows: 29px 1fr;
}

.startButton {
    display: flex;
    align-items: center;
    gap: 5px;
    padding-left: 10px;
    background: linear-gradient(#8a4a4a, #6a2020 45%, #3a0a0a);
    border: 1px solid #3a0a0a;
    border-radius: 0 15px 15px 0;
    font-size: 18px;
    font-weight: bold;
    font-style: italic;
}

.quickIcons {
    display: flex;
    align-items: center;
    gap: 8px;
    padding-left: 12px;
}

.lowerQuick {
    grid-column: 2;
    gap: 7px;
    padding-left: 14px;
    padding-top: 2px;
}

.taskButtons {
    width: 958px;
    flex: none;
    display: grid;
    grid-template-columns: repeat(6, 158px);
    grid-template-rows: 23px 23px;
    column-gap: 2px;
    row-gap: 8px;
    padding-top: 2px;
}

.taskButton {
    display: flex;
    align-items: center;
    gap: 4px;
    padding-left: 8px;
    background: linear-gradient(#e06c6c, #cc4444 45%, #a80c0c);
    border: 1px solid #6e1010;
    border-radius: 2px;
    font-family: "DejaVu Sans", sans-serif;
    font-size: 11px;
    white-space: nowrap;
    overflow: hidden;
}

.taskActive {
    background: linear-gradient(#a01c1c, #8c0808);
}

.taskFolder {
    width: 16px;
    height: 14px;
    flex: none;
}

.langBands {
    flex: 1;
    min-width: 0;
    color: #3a1010;
}

.bandArrows,
.bandNames {
    display: flex;
}

.bandArrows {
    height: 16px;
    padding-left: 178px;
    gap: 32px;
    font-size: 13px;
    font-weight: bold;
    color: #111;
}

.bandArrows span:last-child {
    margin-left: 7px;
}

.bandNames {
    margin-top: 6px;
    padding-left: 158px;
    align-items: center;
    font-size: 11px;
    gap: 25px;
}

.bandActive {
    padding: 2px;
    background: #c06a6a;
}

/* sits over the edge of the tray */
.trayToggle {
    position: relative;
    z-index: 1;
    width: 17px;
    height: 17px;
    margin: 21px -8px 0 0;
    flex: none;
    border-radius: 50%;
    border: 2px solid #e8c8c8;
    background: #3a0a0a;
    text-align: center;
    font-size: 14px;
    font-weight: bold;
    line-height: 11px;
}

.tray {
    width: 132px;
    flex: none;
    display: flex;
    padding: 2px 6px 0 12px;
    background: linear-gradient(#c43a3a, #c43a3a 60%, #b00c0c);
}

.trayIcons {
    width: 35px;
    flex: none;
    display: grid;
    grid-template-columns: 16px 16px;
    grid-auto-rows: 19px;
    align-items: center;
    column-gap: 2px;
}

.clock {
    flex: 1;
    display: flex;
    flex-direction: column;
    gap: 4px;
    padding-top: 2px;
    text-align: center;
    font-family: "DejaVu Sans", sans-serif;
    font-size: 10px;
    line-height: 15px;
}
```
